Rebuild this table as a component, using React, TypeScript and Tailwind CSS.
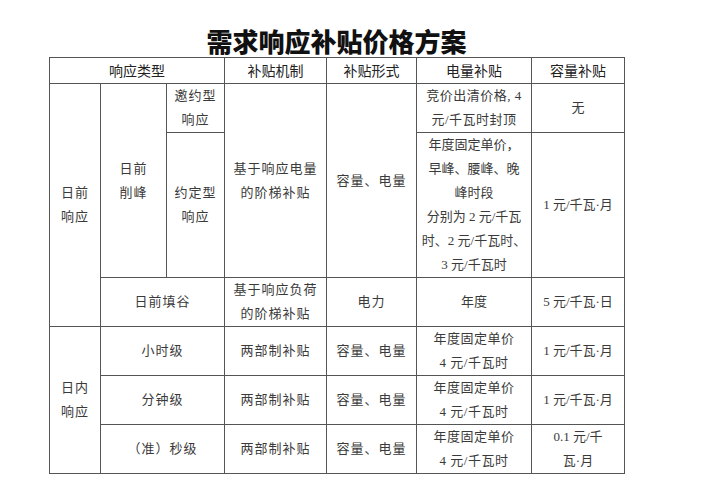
import * as React from "react";

const serif = "font-['Liberation_Serif','Noto_Sans_CJK_SC',serif]";

function Cell({
  children,
  className = "",
  rowSpan,
  colSpan,
  head = false,
}: {
  children?: React.ReactNode;
  className?: string;
  rowSpan?: number;
  colSpan?: number;
  head?: boolean;
}) {
  return (
    <td
      rowSpan={rowSpan}
      colSpan={colSpan}
      className={
        "overflow-hidden whitespace-nowrap border border-[#555] p-0 text-center align-middle " +
        (head
          ? "font-['Liberation_Sans','Noto_Sans_CJK_SC',sans-serif] text-[14px] leading-[24px] text-[#222] "
          : serif + " text-[13px] leading-[24px] text-[#3a3a3a] ") +
        className
      }
    >
      {children}
    </td>
  );
}

export default function App() {
  return (
    <div className="min-h-[478px] w-[706px] bg-white pl-[49px] pt-[28px]">
      <div className="w-[575px]">
        <h1 className="mb-[3px] text-center font-['Noto_Sans_CJK_SC',sans-serif] text-[26px] font-black leading-[26px] text-[#111]">
          需求响应补贴价格方案
        </h1>
        <table className="w-[575px] table-fixed border-collapse">
          <colgroup>
            <col className="w-[51px]" />
            <col className="w-[66px]" />
            <col className="w-[58px]" />
            <col className="w-[102px]" />
            <col className="w-[90px]" />
            <col className="w-[115px]" />
            <col className="w-[93px]" />
          </colgroup>
          <tbody>
            <tr className="h-[26px]">
              <Cell head colSpan={3}>响应类型</Cell>
              <Cell head>补贴机制</Cell>
              <Cell head>补贴形式</Cell>
              <Cell head>电量补贴</Cell>
              <Cell head>容量补贴</Cell>
            </tr>
            <tr className="h-[48px]">
              <Cell rowSpan={3} className="tracking-[1px]">
                日前
                <br />
                响应
              </Cell>
              <Cell rowSpan={2} className="tracking-[1px]">
                日前
                <br />
                削峰
              </Cell>
              <Cell className="tracking-[1px]">
                邀约型
                <br />
                响应
              </Cell>
              <Cell rowSpan={2} className="tracking-[1px]">
                基于响应电量
                <br />
                的阶梯补贴
              </Cell>
              <Cell rowSpan={2} className="tracking-[1px]">容量、电量</Cell>
              <Cell className="tracking-[0.5px]">
                竞价出清价格, 4
                <br />
                元/千瓦时封顶
              </Cell>
              <Cell>无</Cell>
            </tr>
            <tr className="h-[145px]">
              <Cell className="tracking-[1px]">
                约定型
                <br />
                响应
              </Cell>
              <Cell>
                年度固定单价，
                <br />
                早峰、腰峰、晚
                <br />
                峰时段
                <br />
                分别为 2 元/千瓦
                <br />
                时、2 元/千瓦时、
                <br />3 元/千瓦时
              </Cell>
              <Cell>1 元/千瓦·月</Cell>
            </tr>
            <tr className="h-[49px]">
              <Cell colSpan={2} className="tracking-[1px]">日前填谷</Cell>
              <Cell className="tracking-[1px]">
                基于响应负荷
                <br />
                的阶梯补贴
              </Cell>
              <Cell className="tracking-[1px]">电力</Cell>
              <Cell>年度</Cell>
              <Cell>5 元/千瓦·日</Cell>
            </tr>
            <tr className="h-[49px]">
              <Cell rowSpan={3} className="tracking-[1px]">
                日内
                <br />
                响应
              </Cell>
              <Cell colSpan={2} className="tracking-[1px]">小时级</Cell>
              <Cell className="tracking-[1px]">两部制补贴</Cell>
              <Cell className="tracking-[1px]">容量、电量</Cell>
              <Cell className="tracking-[0.5px]">
                年度固定单价
                <br />4 元/千瓦时
              </Cell>
              <Cell>1 元/千瓦·月</Cell>
            </tr>
            <tr className="h-[49px]">
              <Cell colSpan={2} className="tracking-[1px]">分钟级</Cell>
              <Cell className="tracking-[1px]">两部制补贴</Cell>
              <Cell className="tracking-[1px]">容量、电量</Cell>
              <Cell className="tracking-[0.5px]">
                年度固定单价
                <br />4 元/千瓦时
              </Cell>
              <Cell>1 元/千瓦·月</Cell>
            </tr>
            <tr className="h-[49px]">
              <Cell colSpan={2} className="tracking-[1px]">（准）秒级</Cell>
              <Cell className="tracking-[1px]">两部制补贴</Cell>
              <Cell className="tracking-[1px]">容量、电量</Cell>
              <Cell className="tracking-[0.5px]">
                年度固定单价
                <br />4 元/千瓦时
              </Cell>
              <Cell>
                0.1 元/千
                <br />
                瓦·月
              </Cell>
            </tr>
          </tbody>
        </table>
      </div>
    </div>
  );
}
